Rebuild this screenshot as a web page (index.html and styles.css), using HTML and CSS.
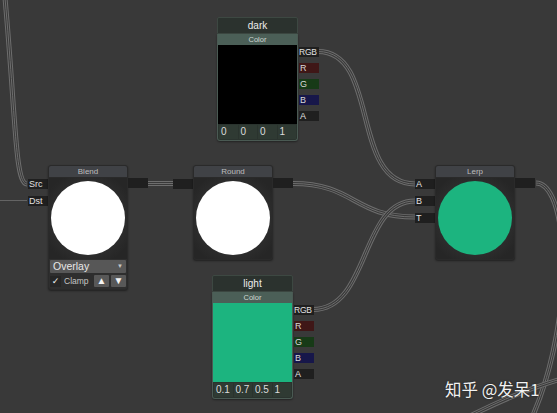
FILE: index.html
```html
<!DOCTYPE html>
<html>
<head>
<meta charset="utf-8">
<link rel="stylesheet" href="styles.css">
</head>
<body>
<div class="canvas">
  <svg class="wires" width="557" height="413" viewBox="0 0 557 413">
    <defs>
      <path id="w1" d="M5,-2 C16,120 15,184 27,184"/>
      <path id="w3" d="M148,183.5 L173,183.5"/>
      <path id="w4" d="M293,183.5 C354,183.5 354,217 415,217"/>
      <path id="w5" d="M318,51.5 C380,51.5 350,184 415,184"/>
      <path id="w6" d="M313,309.5 C370,309.5 360,201 415,201"/>
      <path id="w7" d="M536,183 C588,183 575,520 400,520"/>
      <path id="w8" d="M462,420 C505,398 535,386 565,378"/>
    </defs>
    <line class="single" x1="0" y1="200.5" x2="27" y2="200.5"/>
    <use href="#w1" class="o"/><use href="#w1" class="m"/><use href="#w1" class="c"/>
    <use href="#w3" class="o"/><use href="#w3" class="m"/><use href="#w3" class="c"/>
    <use href="#w4" class="o"/><use href="#w4" class="m"/><use href="#w4" class="c"/>
    <use href="#w5" class="o"/><use href="#w5" class="m"/><use href="#w5" class="c"/>
    <use href="#w6" class="o"/><use href="#w6" class="m"/><use href="#w6" class="c"/>
    <use href="#w7" class="o"/><use href="#w7" class="m"/><use href="#w7" class="c"/>
    <use href="#w8" class="o"/><use href="#w8" class="m"/><use href="#w8" class="c"/>
  </svg>

  <!-- dark color node -->
  <div class="node color-node n-dark">
    <div class="cframe">
      <div class="ctitle">dark</div>
      <div class="cbody">
        <div class="band">Color</div>
        <div class="preview black"></div>
        <div class="nums">
          <span class="num">0</span><span class="num">0</span><span class="num">0</span><span class="num">1</span>
        </div>
      </div>
    </div>
    <div class="cports">
      <div class="port">RGB</div>
      <div class="port pr">R</div>
      <div class="port pg">G</div>
      <div class="port pb">B</div>
      <div class="port">A</div>
    </div>
  </div>

  <!-- light color node -->
  <div class="node color-node n-light">
    <div class="cframe">
      <div class="ctitle">light</div>
      <div class="cbody">
        <div class="band">Color</div>
        <div class="preview green"></div>
        <div class="nums">
          <span class="num">0.1</span><span class="num">0.7</span><span class="num">0.5</span><span class="num">1</span>
        </div>
      </div>
    </div>
    <div class="cports">
      <div class="port">RGB</div>
      <div class="port pr">R</div>
      <div class="port pg">G</div>
      <div class="port pb">B</div>
      <div class="port">A</div>
    </div>
  </div>

  <!-- Blend node -->
  <div class="node n-blend">
    <div class="inputs">
      <div class="port">Src</div>
      <div class="port">Dst</div>
    </div>
    <div class="frame">
      <div class="title">Blend</div>
      <div class="body"><div class="disc white"></div></div>
      <div class="controls">
        <div class="dropdown"><span>Overlay</span><span class="arrow">▼</span></div>
        <div class="checkrow">
          <span class="check">✓</span>
          <span class="clamp">Clamp</span>
          <span class="btn">▲</span>
          <span class="btn">▼</span>
        </div>
      </div>
    </div>
    <div class="outputs"><div class="port"></div></div>
  </div>

  <!-- Round node -->
  <div class="node n-round">
    <div class="inputs"><div class="port"></div></div>
    <div class="frame">
      <div class="title">Round</div>
      <div class="body"><div class="disc white"></div></div>
    </div>
    <div class="outputs"><div class="port"></div></div>
  </div>

  <!-- Lerp node -->
  <div class="node n-lerp">
    <div class="inputs inputs3">
      <div class="port">A</div>
      <div class="port">B</div>
      <div class="port">T</div>
    </div>
    <div class="frame">
      <div class="title">Lerp</div>
      <div class="body"><div class="disc green"></div></div>
    </div>
    <div class="outputs"><div class="port"></div></div>
  </div>

  <div class="watermark">知乎 @发呆1</div>
</div>
</body>
</html>
```

FILE: styles.css
```css
html, body {
  margin: 0;
  padding: 0;
  background: #393939;
}
.canvas {
  position: relative;
  width: 557px;
  height: 413px;
  overflow: hidden;
  background: #393939;
  font-family: "Liberation Sans", "DejaVu Sans", sans-serif;
}
.wires {
  position: absolute;
  left: 0;
  top: 0;
}
.wires path { fill: none; }
.wires .o { stroke: #6e6e6e; stroke-width: 5; fill: none; }
.wires .m { stroke: #393939; stroke-width: 3; fill: none; }
.wires .c { stroke: #6e6e6e; stroke-width: 1; fill: none; }
.wires .single { stroke: #646464; stroke-width: 1; }

.node {
  position: absolute;
  display: flex;
  align-items: flex-start;
}

/* ports */
.port {
  width: 20px;
  height: 10px;
  background: #1f1f1f;
  color: #e2e2e2;
  font-size: 9px;
  line-height: 10px;
  padding-left: 1px;
  box-sizing: border-box;
  white-space: nowrap;
  overflow: hidden;
}
.cports .port:first-child { font-size: 8.5px; letter-spacing: -0.2px; padding-left: 0; }
.pr { background: #3f1717; }
.pg { background: #173a17; }
.pb { background: #17174a; }
.port.pr, .port.pg, .port.pb { color: #d8d8d8; }

.inputs {
  display: flex;
  flex-direction: column;
  gap: 7px;
  padding-top: 14px;
}
.outputs {
  display: flex;
  flex-direction: column;
  padding-top: 13px;
}

/* standard node frame */
.frame {
  width: 80px;
  border-radius: 3px;
  background: #2d2d2d;
  box-shadow: 0 1px 2px rgba(0,0,0,0.45);
  overflow: hidden;
  border: 1px solid #2a2a2a;
  box-sizing: border-box;
}
.title {
  height: 11px;
  background: #404246;
  color: #bdbdbd;
  font-size: 8px;
  line-height: 11px;
  text-align: center;
  border-bottom: 1px solid #2a2a2a;
}
.body {
  height: 81px;
  box-sizing: border-box;
  padding: 3px 2px 3px;
  display: flex;
  justify-content: center;
  background: radial-gradient(circle at 50% 50%, #3c3c3c 0%, #313131 50%, #262626 85%);
}
.disc {
  width: 74px;
  height: 74px;
  border-radius: 50%;
}
.disc.white { background: #ffffff; }
.disc.green { background: #1cb47f; }

.n-blend { left: 28px; top: 165px; }
.n-round { left: 173px; top: 165px; }
.n-lerp  { left: 415px; top: 165px; }

.controls {
  background: #2e2e2e;
  padding: 1px 1px 2px;
  display: flex;
  flex-direction: column;
  gap: 2px;
}
.dropdown {
  height: 13px;
  background: #575757;
  color: #e8e8e8;
  font-size: 10.5px;
  line-height: 13px;
  padding: 0 3px;
  display: flex;
  justify-content: space-between;
  align-items: center;
  border-radius: 1px;
}
.dropdown .arrow { font-size: 6px; color: #c8c8c8; }
.checkrow {
  display: flex;
  align-items: center;
  height: 12px;
  gap: 2px;
}
.check {
  width: 11px;
  height: 11px;
  background: #262626;
  color: #f2f2f2;
  font-size: 9px;
  line-height: 11px;
  text-align: center;
}
.clamp {
  flex: 1;
  color: #c6c6c6;
  font-size: 8.5px;
  padding-left: 1px;
}
.btn {
  width: 15px;
  height: 12px;
  background: #585858;
  color: #f4f4f4;
  font-size: 10px;
  line-height: 12px;
  text-align: center;
  border-radius: 1px;
}

/* color nodes */
.color-node { gap: 1px; }
.n-dark { left: 217px; top: 17px; }
.n-light { left: 212px; top: 275px; }
.cframe { width: 81px; }
.ctitle {
  height: 15px;
  background: #2b322e;
  border: 1px solid #3d4842;
  border-radius: 2px 2px 0 0;
  color: #ececec;
  font-size: 10px;
  line-height: 15px;
  text-align: center;
  box-sizing: content-box;
  width: 79px;
}
.cbody {
  border: 1px solid #4a5a53;
  border-top: none;
  border-radius: 0 0 3px 3px;
  background: #2a332e;
  box-shadow: 0 1px 2px rgba(0,0,0,0.4);
}
.band {
  height: 11px;
  background: #4b5f57;
  color: #cfd7d3;
  font-size: 7.5px;
  line-height: 11px;
  text-align: center;
}
.preview { height: 79px; }
.preview.black { background: #000000; }
.preview.green { background: #1cb47f; }
.nums {
  display: flex;
  gap: 1px;
  padding: 1px 1px 1px;
  height: 14px;
}
.num {
  flex: 1;
  background: #2f3a33;
  color: #dcdcdc;
  font-size: 10px;
  line-height: 14px;
  padding-left: 2px;
}
.cports {
  display: flex;
  flex-direction: column;
  gap: 6px;
  padding-top: 30px;
}

.watermark {
  position: absolute;
  left: 445px;
  top: 377px;
  font-family: "Noto Sans CJK SC", "Noto Sans", sans-serif;
  font-size: 16.5px;
  color: #f2f2f2;
  text-shadow: 0 0 2px rgba(0,0,0,0.6);
  white-space: nowrap;
}
```
